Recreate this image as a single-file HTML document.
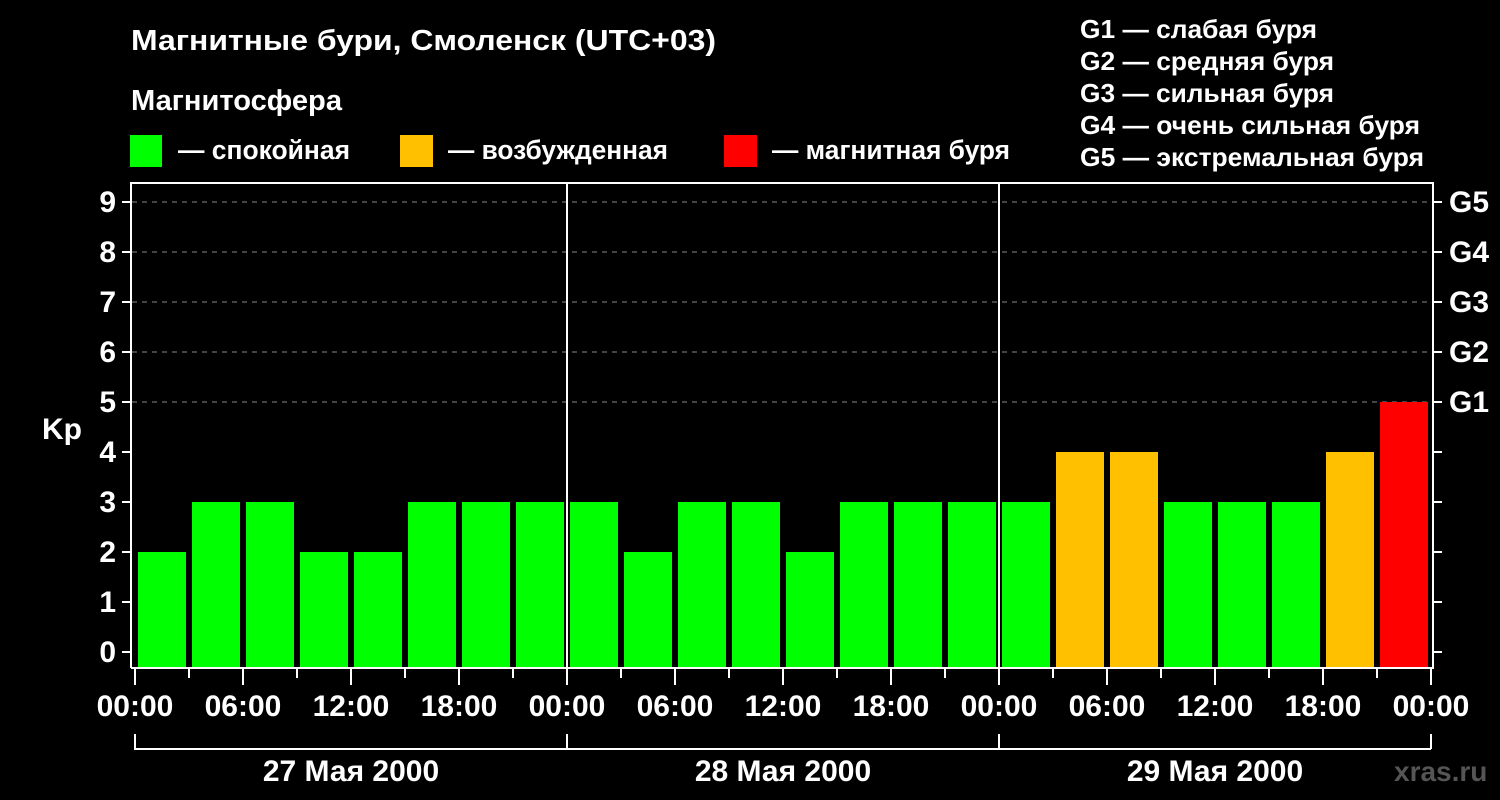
<!DOCTYPE html>
<html><head><meta charset="utf-8"><style>
html,body{margin:0;padding:0;background:#000;width:1500px;height:800px;overflow:hidden}
svg text{font-family:"Liberation Sans",sans-serif;font-weight:bold;fill:#fff}
</style></head><body>
<svg width="1500" height="800" xmlns="http://www.w3.org/2000/svg">
<text x="131" y="50" font-size="29" textLength="585" lengthAdjust="spacingAndGlyphs">Магнитные бури, Смоленск (UTC+03)</text>
<text x="131" y="110" font-size="29" textLength="211" lengthAdjust="spacingAndGlyphs">Магнитосфера</text>
<rect x="130" y="135" width="32" height="32" fill="#00ff00"/>
<text x="178" y="159" font-size="27" textLength="172" lengthAdjust="spacingAndGlyphs">— спокойная</text>
<rect x="400" y="135" width="33" height="32" fill="#ffc000"/>
<text x="448" y="159" font-size="27" textLength="220" lengthAdjust="spacingAndGlyphs">— возбужденная</text>
<rect x="724" y="135" width="33" height="32" fill="#ff0000"/>
<text x="772" y="159" font-size="27" textLength="238" lengthAdjust="spacingAndGlyphs">— магнитная буря</text>
<g font-size="26">
<text x="1080" y="38" textLength="237" lengthAdjust="spacingAndGlyphs">G1 — слабая буря</text>
<text x="1080" y="70" textLength="254" lengthAdjust="spacingAndGlyphs">G2 — средняя буря</text>
<text x="1080" y="102" textLength="254" lengthAdjust="spacingAndGlyphs">G3 — сильная буря</text>
<text x="1080" y="134" textLength="340" lengthAdjust="spacingAndGlyphs">G4 — очень сильная буря</text>
<text x="1080" y="166" textLength="344" lengthAdjust="spacingAndGlyphs">G5 — экстремальная буря</text>
</g>
<g stroke="#888" stroke-width="1" stroke-dasharray="5,5">
<line x1="132" x2="1432" y1="202" y2="202"/>
<line x1="132" x2="1432" y1="252" y2="252"/>
<line x1="132" x2="1432" y1="302" y2="302"/>
<line x1="132" x2="1432" y1="352" y2="352"/>
<line x1="132" x2="1432" y1="402" y2="402"/>
</g>
<g>
<rect x="138" y="552" width="48" height="116" fill="#00ff00"/>
<rect x="192" y="502" width="48" height="166" fill="#00ff00"/>
<rect x="246" y="502" width="48" height="166" fill="#00ff00"/>
<rect x="300" y="552" width="48" height="116" fill="#00ff00"/>
<rect x="354" y="552" width="48" height="116" fill="#00ff00"/>
<rect x="408" y="502" width="48" height="166" fill="#00ff00"/>
<rect x="462" y="502" width="48" height="166" fill="#00ff00"/>
<rect x="516" y="502" width="48" height="166" fill="#00ff00"/>
<rect x="570" y="502" width="48" height="166" fill="#00ff00"/>
<rect x="624" y="552" width="48" height="116" fill="#00ff00"/>
<rect x="678" y="502" width="48" height="166" fill="#00ff00"/>
<rect x="732" y="502" width="48" height="166" fill="#00ff00"/>
<rect x="786" y="552" width="48" height="116" fill="#00ff00"/>
<rect x="840" y="502" width="48" height="166" fill="#00ff00"/>
<rect x="894" y="502" width="48" height="166" fill="#00ff00"/>
<rect x="948" y="502" width="48" height="166" fill="#00ff00"/>
<rect x="1002" y="502" width="48" height="166" fill="#00ff00"/>
<rect x="1056" y="452" width="48" height="216" fill="#ffc000"/>
<rect x="1110" y="452" width="48" height="216" fill="#ffc000"/>
<rect x="1164" y="502" width="48" height="166" fill="#00ff00"/>
<rect x="1218" y="502" width="48" height="166" fill="#00ff00"/>
<rect x="1272" y="502" width="48" height="166" fill="#00ff00"/>
<rect x="1326" y="452" width="48" height="216" fill="#ffc000"/>
<rect x="1380" y="402" width="48" height="266" fill="#ff0000"/>
</g>
<g stroke="#fff" stroke-width="2" fill="none">
<polyline points="131,668 131,183 1433,183 1433,668 131,668"/>
<line x1="567" y1="183" x2="567" y2="668"/>
<line x1="999" y1="183" x2="999" y2="668"/>
<path d="M122 202H131M122 252H131M122 302H131M122 352H131M122 402H131M122 452H131M122 502H131M122 552H131M122 602H131M122 652H131"/>
<path d="M1433 202H1442M1433 252H1442M1433 302H1442M1433 352H1442M1433 402H1442M1433 452H1442M1433 502H1442M1433 552H1442M1433 602H1442M1433 652H1442"/>
<path d="M135 668V685M243 668V685M351 668V685M459 668V685M567 668V685M675 668V685M783 668V685M891 668V685M999 668V685M1107 668V685M1215 668V685M1323 668V685M1431 668V685"/>
<path d="M189 668V678M297 668V678M405 668V678M513 668V678M621 668V678M729 668V678M837 668V678M945 668V678M1053 668V678M1161 668V678M1269 668V678M1377 668V678"/>
<path d="M135 734V749H1431M567 734V749M999 734V749M1431 734V749"/>
</g>
<g font-size="30" text-anchor="end">
<text x="116" y="212">9</text><text x="116" y="262">8</text><text x="116" y="312">7</text>
<text x="116" y="362">6</text><text x="116" y="412">5</text><text x="116" y="462">4</text>
<text x="116" y="512">3</text><text x="116" y="562">2</text><text x="116" y="612">1</text>
<text x="116" y="662">0</text>
</g>
<text x="42" y="439" font-size="30">Kp</text>
<g font-size="30">
<text x="1449" y="212">G5</text><text x="1449" y="262">G4</text><text x="1449" y="312">G3</text>
<text x="1449" y="362">G2</text><text x="1449" y="412">G1</text>
</g>
<g font-size="30" text-anchor="middle">
<text x="135" y="716">00:00</text><text x="243" y="716">06:00</text><text x="351" y="716">12:00</text><text x="459" y="716">18:00</text>
<text x="567" y="716">00:00</text><text x="675" y="716">06:00</text><text x="783" y="716">12:00</text><text x="891" y="716">18:00</text>
<text x="999" y="716">00:00</text><text x="1107" y="716">06:00</text><text x="1215" y="716">12:00</text><text x="1323" y="716">18:00</text>
<text x="1431" y="716">00:00</text>
<text x="351" y="781">27 Мая 2000</text>
<text x="783" y="781">28 Мая 2000</text>
<text x="1215" y="781">29 Мая 2000</text>
</g>
<text x="1394" y="781" font-size="28" style="fill:#555">xras.ru</text>
</svg>
</body></html>
